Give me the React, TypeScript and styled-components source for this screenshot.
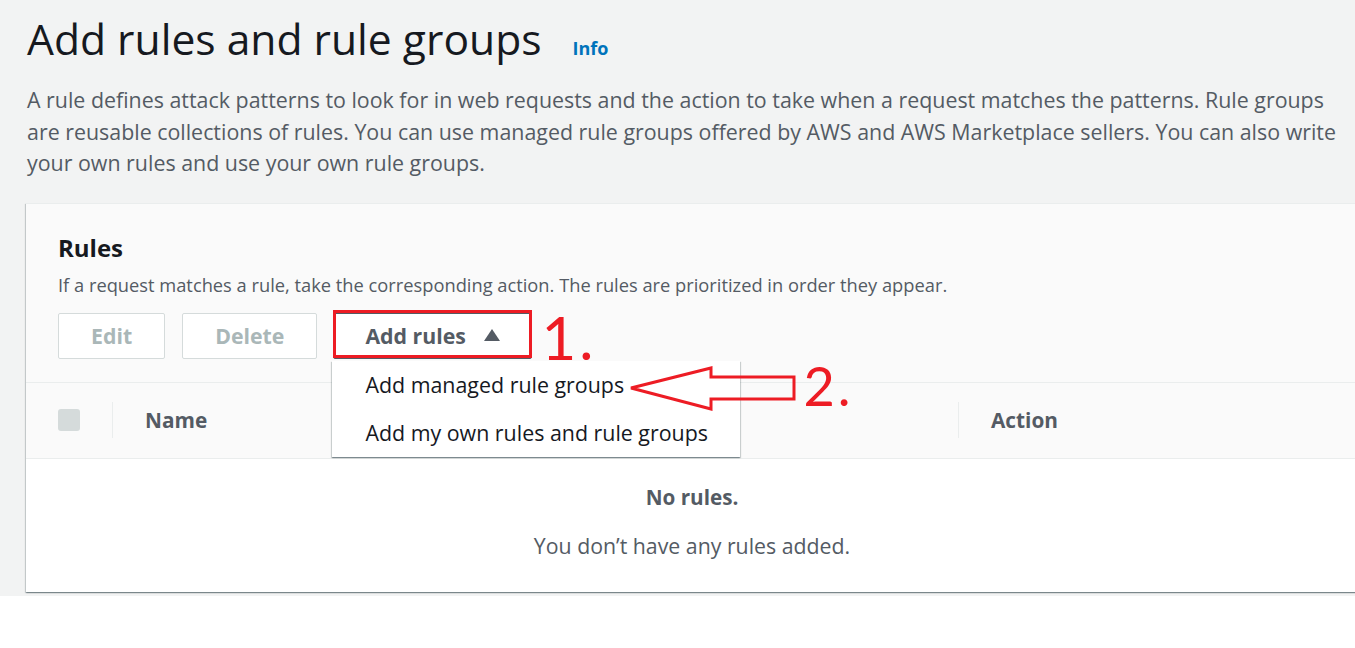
import React from "react";
import styled, { createGlobalStyle } from "styled-components";

const GlobalStyle = createGlobalStyle`
  html, body { margin: 0; padding: 0; background: #ffffff; overflow: hidden; }
  body { font-family: "Open Sans", "Liberation Sans", Arial, sans-serif; }
  * { box-sizing: border-box; }
`;

const Page = styled.div`
  background: #f2f3f3;
  height: 596px;
  padding: 10px 0 0 26px;
  overflow: hidden;
`;

const TitleRow = styled.div`
  display: flex;
  align-items: baseline;
  gap: 31px;
  padding-left: 1px;
`;

const Title = styled.h1`
  margin: 0;
  font-size: 42.6px;
  font-weight: 400;
  line-height: 56px;
  color: #16191f;
`;

const InfoLink = styled.a`
  font-size: 18px;
  font-weight: 700;
  color: #0073bb;
  text-decoration: none;
`;

const Description = styled.p`
  margin: 18px 0 0;
  padding-left: 1px;
  width: 1325px;
  font-size: 21.4px;
  line-height: 31.5px;
  color: #545b64;
`;

const Card = styled.section`
  margin-top: 24px;
  width: 1332px;
  background: #ffffff;
  border-top: 1px solid #eaeded;
  box-shadow: 0 1px 1px 0 rgba(0, 28, 36, 0.3), 1px 1px 1px 0 rgba(0, 28, 36, 0.15),
    -1px 1px 1px 0 rgba(0, 28, 36, 0.15);
`;

const CardHeader = styled.header`
  background: #fafafa;
  padding: 28px 32px 23px;
`;

const CardTitle = styled.h2`
  margin: 0;
  font-size: 24px;
  font-weight: 700;
  line-height: 32px;
  color: #16191f;
`;

const CardSubtitle = styled.p`
  margin: 8px 0 0;
  font-size: 18.3px;
  line-height: 26px;
  color: #545b64;
`;

const Toolbar = styled.div`
  display: flex;
  gap: 17px;
  margin-top: 15px;
`;

const Button = styled.button<{ $disabled?: boolean }>`
  height: 46px;
  padding: 0 ${(p) => (p.$disabled ? "32px" : "31px")};
  border: 1px solid ${(p) => (p.$disabled ? "#d5dbdb" : "#545b64")};
  border-radius: 2px;
  background: #ffffff;
  font-family: inherit;
  font-size: 21.3px;
  font-weight: 700;
  color: ${(p) => (p.$disabled ? "#aab7b8" : "#545b64")};
  display: flex;
  align-items: center;
  gap: 18px;
`;

const DropdownAnchor = styled.div`
  position: relative;
  margin-left: -1px;
`;

const Caret = styled.span`
  width: 0;
  height: 0;
  border-left: 8px solid transparent;
  border-right: 8px solid transparent;
  border-bottom: 12px solid #545b64;
  margin-bottom: 2px;
`;

const AnnotationBox = styled.div`
  position: absolute;
  inset: -3px 0 1px 0;
  border: 3px solid #ed1c24;
  pointer-events: none;
`;

const StepLabel = styled.span<{ $size: number }>`
  position: absolute;
  font-family: Lato, "Open Sans", sans-serif;
  font-size: ${(p) => p.$size}px;
  line-height: 1;
  letter-spacing: 3px;
  color: #ed1c24;
  white-space: nowrap;
`;

const Menu = styled.ul`
  position: absolute;
  top: 48px;
  left: -1px;
  width: 408px;
  margin: 0;
  padding: 0;
  list-style: none;
  background: #ffffff;
  box-shadow: 0 1px 1px 0 rgba(0, 28, 36, 0.3), 1px 1px 1px 0 rgba(0, 28, 36, 0.15),
    -1px 1px 1px 0 rgba(0, 28, 36, 0.15);
  z-index: 5;
`;

const MenuItem = styled.li`
  height: 48px;
  padding: 0 33px;
  display: flex;
  align-items: center;
  font-size: 21.4px;
  color: #16191f;
  white-space: nowrap;
`;

const Arrow = styled.svg`
  position: absolute;
  left: 297px;
  top: 4px;
  overflow: visible;
`;

const HeaderRow = styled.div`
  display: grid;
  grid-template-columns: 86px 846px 1fr;
  height: 77px;
  background: #fafafa;
  border-top: 1px solid #eaeded;
  border-bottom: 1px solid #eaeded;
  align-items: center;
`;

const Cell = styled.div<{ $divider?: boolean }>`
  height: 36px;
  display: flex;
  align-items: center;
  padding-left: 32px;
  border-left: ${(p) => (p.$divider ? "1px solid #eaeded" : "none")};
  font-size: 20.8px;
  font-weight: 700;
  color: #545b64;
`;

const Checkbox = styled.span`
  width: 22px;
  height: 22px;
  border-radius: 3px;
  background: #d5dbdb;
`;

const Empty = styled.div`
  height: 133px;
  display: flex;
  flex-direction: column;
  align-items: center;
  padding-top: 24px;
  color: #545b64;
`;

const EmptyTitle = styled.div`
  font-size: 20.7px;
  font-weight: 700;
  line-height: 28px;
`;

const EmptyText = styled.div`
  margin-top: 21px;
  font-size: 21.3px;
  line-height: 28px;
`;

export default function App() {
  return (
    <>
      <GlobalStyle />
      <Page>
        <TitleRow>
          <Title>Add rules and rule groups</Title>
          <InfoLink href="#">Info</InfoLink>
        </TitleRow>
        <Description>
          A rule defines attack patterns to look for in web requests and the action to take when a
          request matches the patterns. Rule groups are reusable collections of rules. You can use
          managed rule groups offered by AWS and AWS Marketplace sellers. You can also write your
          own rules and use your own rule groups.
        </Description>
        <Card>
          <CardHeader>
            <CardTitle>Rules</CardTitle>
            <CardSubtitle>
              If a request matches a rule, take the corresponding action. The rules are prioritized
              in order they appear.
            </CardSubtitle>
            <Toolbar>
              <Button $disabled>Edit</Button>
              <Button $disabled>Delete</Button>
              <DropdownAnchor>
                <Button>
                  Add rules
                  <Caret />
                </Button>
                <AnnotationBox />
                <StepLabel $size={60} style={{ left: "208px", top: "-6px" }}>
                  1.
                </StepLabel>
                <Menu>
                  <MenuItem>Add managed rule groups</MenuItem>
                  <MenuItem>Add my own rules and rule groups</MenuItem>
                  <Arrow width="168" height="46" viewBox="0 0 168 46">
                    <polygon
                      points="2,23 82,3 82,12 165,12 165,34 82,34 82,44"
                      fill="none"
                      stroke="#ed1c24"
                      strokeWidth="3"
                      strokeLinejoin="miter"
                    />
                  </Arrow>
                  <StepLabel $size={54} style={{ left: "471px", top: "-2px" }}>
                    2.
                  </StepLabel>
                </Menu>
              </DropdownAnchor>
            </Toolbar>
          </CardHeader>
          <HeaderRow>
            <Cell>
              <Checkbox />
            </Cell>
            <Cell $divider>Name</Cell>
            <Cell $divider>Action</Cell>
          </HeaderRow>
          <Empty>
            <EmptyTitle>No rules.</EmptyTitle>
            <EmptyText>You don’t have any rules added.</EmptyText>
          </Empty>
        </Card>
      </Page>
    </>
  );
}
